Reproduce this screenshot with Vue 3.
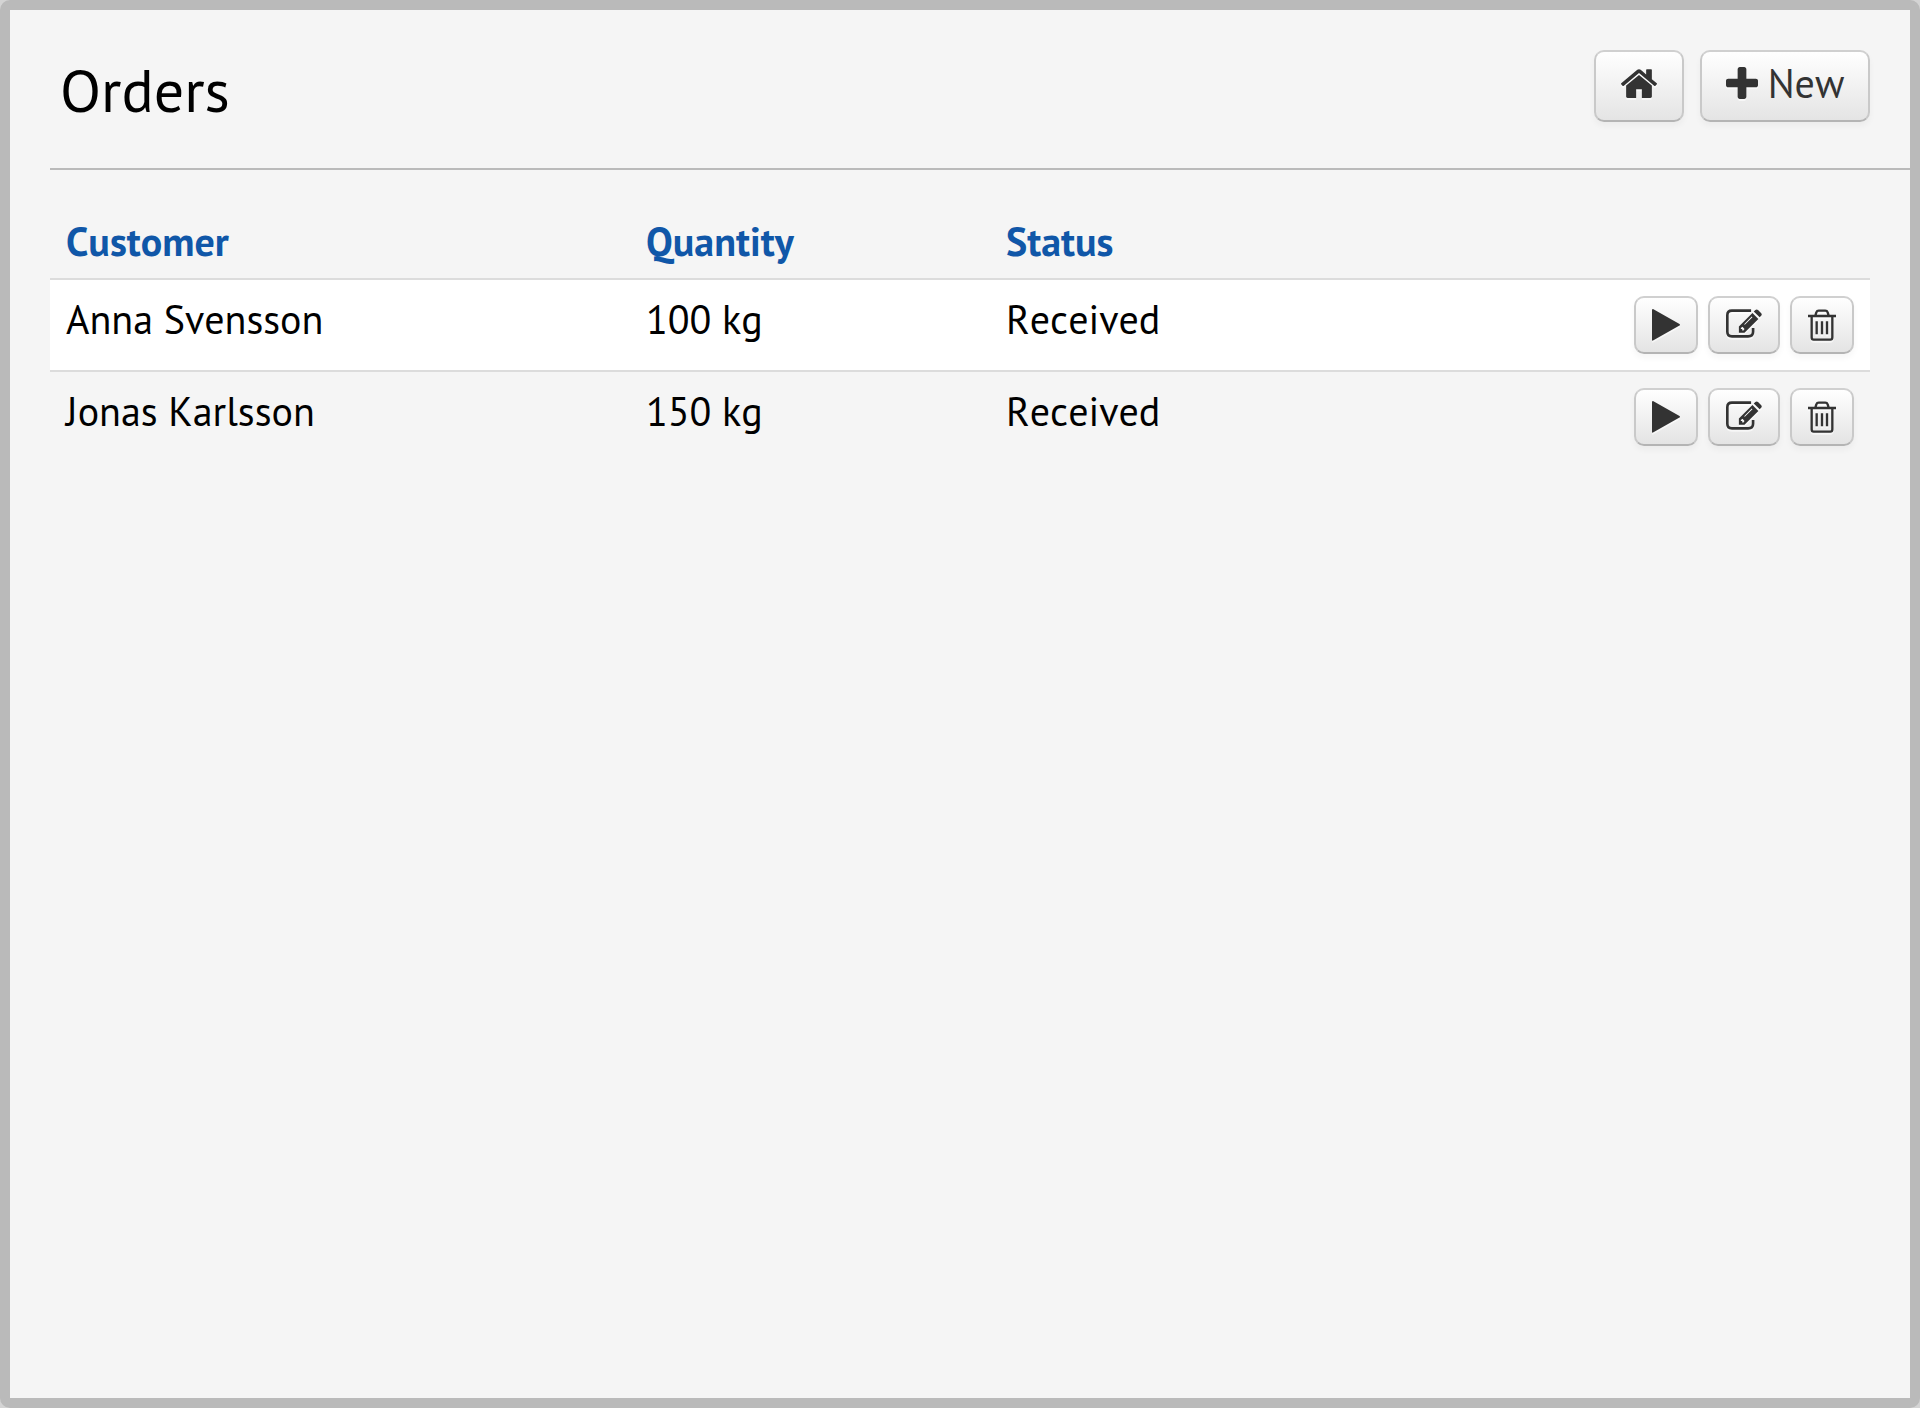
<script setup>
const columns = ['Customer', 'Quantity', 'Status']
const orders = [
  { customer: 'Anna Svensson', quantity: '100 kg', status: 'Received' },
  { customer: 'Jonas Karlsson', quantity: '150 kg', status: 'Received' },
]
</script>

<template>
  <main class="window">
    <header class="header">
      <h1 class="title">Orders</h1>
      <div class="toolbar">
        <button type="button" class="button home" aria-label="Home">
          <svg width="36" height="29" viewBox="90 246 1612 1290" aria-hidden="true">
            <path d="M1472 992v480q0 26-19 45t-45 19h-384v-384h-256v384h-384q-26 0-45-19t-19-45v-480q0-1 .5-3t.5-3l575-474 575 474q1 2 1 6zm223-69l-62 74q-8 9-21 11h-3q-13 0-21-7l-692-577-692 577q-12 8-24 7-13-2-21-11l-62-74q-8-10-7-23.5t11-21.5l719-599q32-26 76-26t76 26l244 204v-195q0-14 9-23t23-9h192q14 0 23 9t9 23v408l219 182q10 8 11 21.5t-7 23.5z" />
          </svg>
        </button>
        <button type="button" class="button new">
          <svg width="32" height="32" viewBox="192 128 1408 1408" aria-hidden="true">
            <path d="M1600 736v192q0 40-28 68t-68 28h-416v416q0 40-28 68t-68 28h-192q-40 0-68-28t-28-68v-416h-416q-40 0-68-28t-28-68v-192q0-40 28-68t68-28h416v-416q0-40 28-68t68-28h192q40 0 68 28t28 68v416h416q40 0 68 28t28 68z" />
          </svg>
          <span>New</span>
        </button>
      </div>
    </header>

    <table class="orders">
      <colgroup>
        <col class="col-customer" />
        <col class="col-quantity" />
        <col />
        <col class="col-actions" />
      </colgroup>
      <thead>
        <tr>
          <th v-for="name in columns" :key="name" scope="col">{{ name }}</th>
          <td></td>
        </tr>
      </thead>
      <tbody>
        <tr v-for="order in orders" :key="order.customer">
          <td>{{ order.customer }}</td>
          <td>{{ order.quantity }}</td>
          <td>{{ order.status }}</td>
          <td>
            <div class="actions">
              <button type="button" class="button small" :aria-label="`Start order for ${order.customer}`">
                <svg width="28" height="32" viewBox="0 0 28 32" aria-hidden="true">
                  <path d="M0 1Q0 0 1 0L27.5 15Q28.500 16 27.500 16.500L1 31.500Q0 32 0 31Z" />
                </svg>
              </button>
              <button type="button" class="button small wide" :aria-label="`Edit order for ${order.customer}`">
                <svg width="36" height="29" viewBox="348 118 109 86" aria-hidden="true">
                  <path class="line" stroke-width="8" d="M424 122H366Q352 122 352 136V186Q352 200 366 200H415Q430 200 430 186V175" />
                  <path fill-rule="evenodd" d="M387 170L428 129L446 147L404 189H387ZM393 175V178H397V182H401L404 178L398 171ZM403 163L405 165L428 142L426 140Z" />
                  <path d="M432 125L437 120Q441 117 445 120L454 129Q458 133 455 137L450 142Z" />
                </svg>
              </button>
              <button type="button" class="button small" :aria-label="`Delete order for ${order.customer}`">
                <svg width="28" height="32" viewBox="595 116 84 96" aria-hidden="true">
                  <path class="line" stroke-width="7" d="M595 137H679M617 136L620 126Q622 121 627 121H647Q652 121 654 126L657 136M606 138V201Q606 208 612 208H662Q668 208 668 201V138M621 153V192M637 153V192M652 153V192" />
                </svg>
              </button>
            </div>
          </td>
        </tr>
      </tbody>
    </table>
  </main>
</template>

<style>
body {
  background: #d4d4d4;
}
</style>

<style scoped>
.window {
  box-sizing: border-box;
  min-height: 100vh;
  padding-left: 40px;
  border: 10px solid #bababa;
  border-radius: 10px;
  background: linear-gradient(#f5f5f5, #f5f5f5) padding-box, #bababa border-box;
  color: #000;
  font-family: "PT Sans", Lato, sans-serif;
  font-size: 40px;
  font-kerning: none;
  line-height: 46px;
}

.header {
  display: flex;
  justify-content: space-between;
  align-items: flex-start;
  padding: 40px 40px 46px 10px;
  border-bottom: 2px solid #bababa;
}

.title {
  margin: 0;
  padding-top: 4px;
  font-size: 60px;
  font-weight: 400;
  line-height: 72px;
  height: 68px;
}

.toolbar {
  display: flex;
  gap: 16px;
}

.button {
  box-sizing: border-box;
  display: flex;
  align-items: center;
  justify-content: center;
  margin: 0;
  padding: 0;
  border: 2px solid #c9c9c9;
  border-top-color: #d0d0d0;
  border-bottom-color: #b4b4b4;
  border-radius: 10px;
  background: linear-gradient(#fff, #e4e4e4);
  box-shadow: 0 4px 6px rgba(0, 0, 0, 0.04);
  color: #333;
  font: inherit;
  cursor: pointer;
}

.button svg {
  fill: currentColor;
  filter: drop-shadow(0 2px 0 rgba(255, 255, 255, 0.6));
}

.button .line {
  fill: none;
  stroke: currentColor;
}

.home,
.new {
  width: 90px;
  height: 72px;
  padding-bottom: 6px;
}

.new {
  gap: 10px;
  width: 170px;
}

.small {
  align-items: flex-start;
  width: 64px;
  height: 58px;
  padding-top: 11px;
}

.wide {
  width: 72px;
}

.orders {
  width: calc(100% - 40px);
  margin-top: 38px;
  border-collapse: separate;
  border-spacing: 0;
  table-layout: fixed;
}

.col-customer {
  width: 580px;
}

.col-quantity {
  width: 360px;
}

.col-actions {
  width: 260px;
}

.orders th {
  padding: 10px 16px 14px;
  color: #1057a8;
  font-weight: 700;
  text-align: left;
}

.orders tbody td {
  padding: 16px;
  border-top: 2px solid #dcdcdc;
  vertical-align: top;
}

.orders tbody tr:nth-child(odd) {
  background: #fff;
}

.actions {
  display: flex;
  justify-content: flex-end;
  gap: 10px;
}
</style>
